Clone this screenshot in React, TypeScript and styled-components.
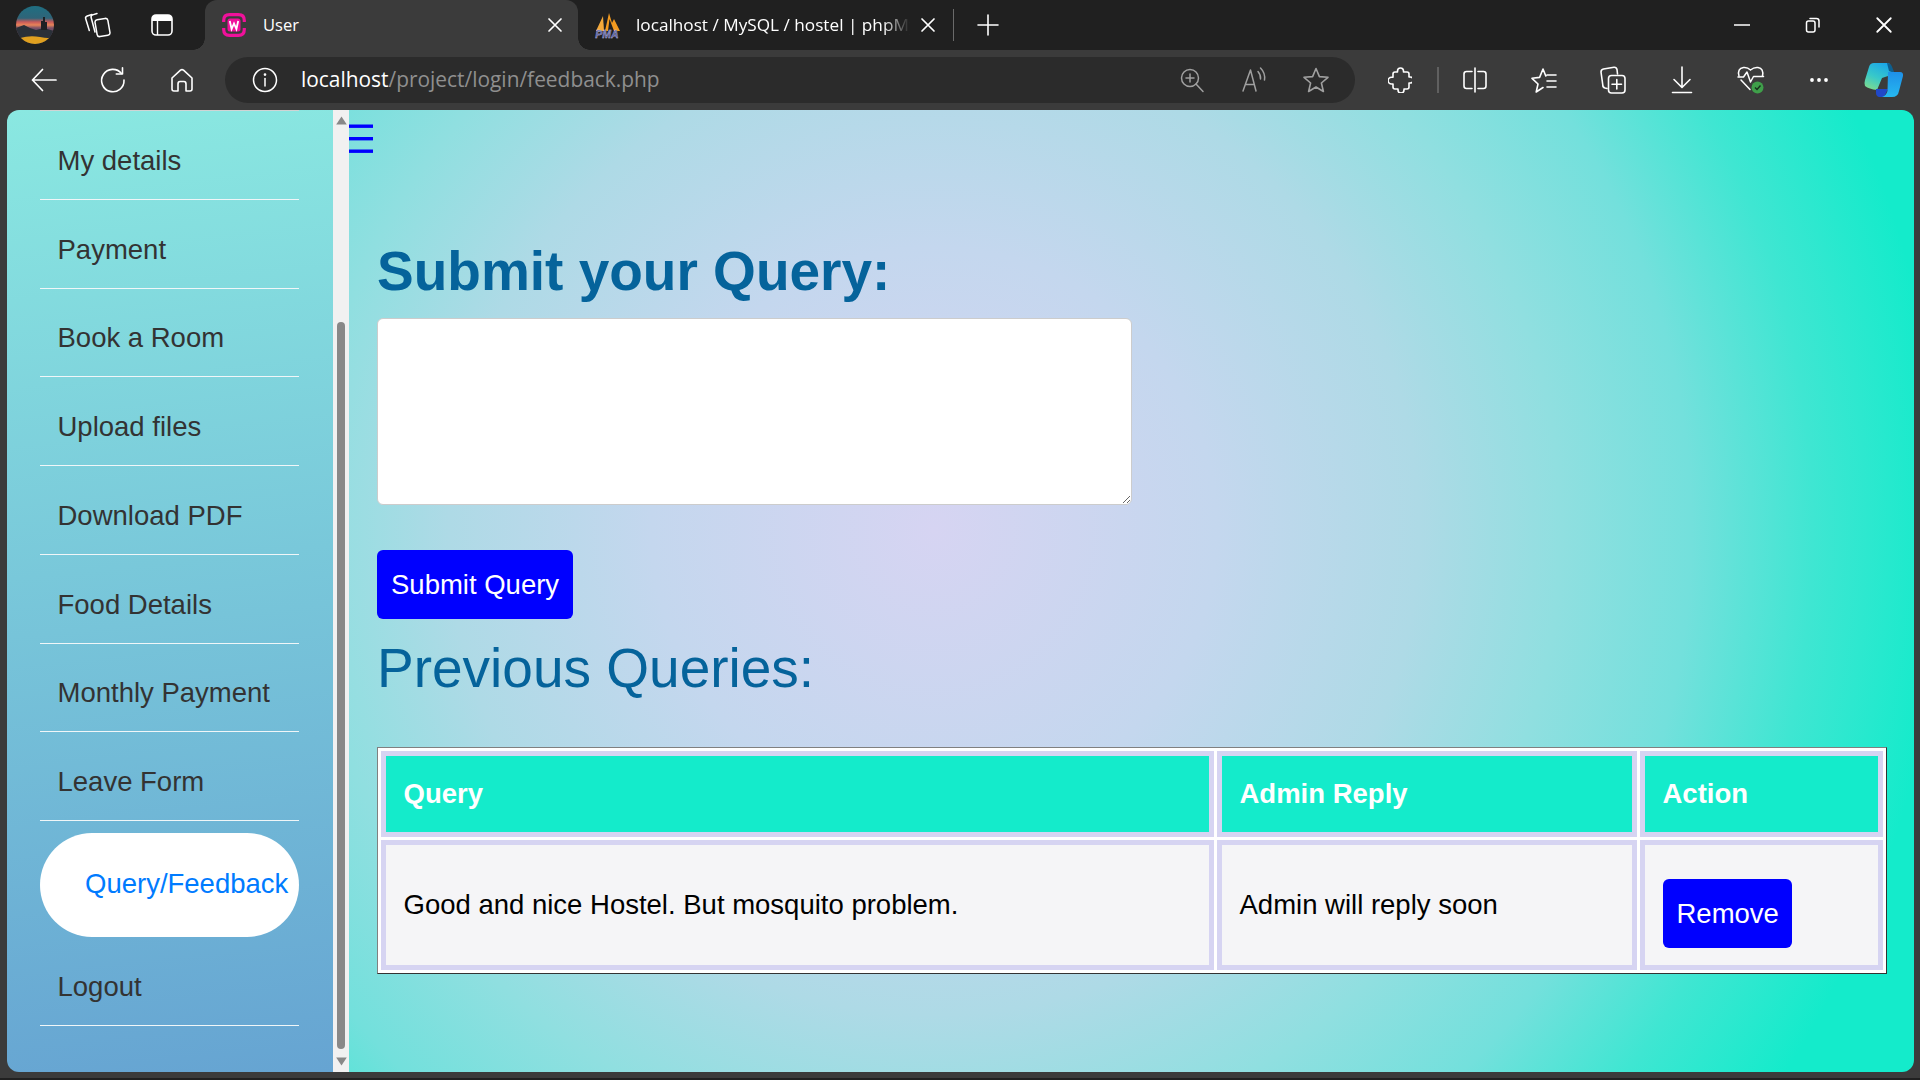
import React from "react";
import styled, { createGlobalStyle } from "styled-components";

const Global = createGlobalStyle`
  html, body { margin: 0; padding: 0; height: 100%; background: #202020; overflow: hidden; }
  #root { height: 100%; }
  * { box-sizing: border-box; }
`;

const CHROME_FONT = `"Open Sans", "Noto Sans", sans-serif`;
const PAGE_FONT = `"Liberation Sans", Arial, sans-serif`;

const Browser = styled.div`
  display: flex;
  flex-direction: column;
  height: 1080px;
  width: 1920px;
  background: #3b3b3b;
  border-bottom: 2px solid #202020;
`;

const TabStrip = styled.div`
  display: flex;
  align-items: center;
  height: 50px;
  flex: none;
  background: #202020;
  padding-left: 16px;
  color: #fff;
  font-family: ${CHROME_FONT};
`;

const Avatar = styled.div`
  width: 38px;
  height: 38px;
  margin-right: 10px;
  display: flex;
`;

const Slot = styled.div<{ $w: number }>`
  width: ${(p) => p.$w}px;
  flex: none;
  display: flex;
  align-items: center;
  justify-content: center;
  color: #fff;
`;

const ActiveTab = styled.div`
  position: relative;
  display: flex;
  align-items: center;
  width: 373px;
  height: 50px;
  margin-left: 11px;
  padding-left: 17px;
  background: #3b3b3b;
  border-radius: 12px 12px 0 0;
  font-size: 16.5px;
  &::before,
  &::after {
    content: "";
    position: absolute;
    bottom: 0;
    width: 12px;
    height: 12px;
  }
  &::before {
    left: -12px;
    background: radial-gradient(circle at 0 0, transparent 11.5px, #3b3b3b 12px);
  }
  &::after {
    right: -12px;
    background: radial-gradient(circle at 100% 0, transparent 11.5px, #3b3b3b 12px);
  }
`;

const TabTitle = styled.span<{ $fade?: boolean }>`
  flex: 1;
  min-width: 0;
  margin-left: ${(p) => (p.$fade ? 15 : 17)}px;
  padding-bottom: 2px;
  white-space: nowrap;
  overflow: hidden;
  ${(p) =>
    p.$fade
      ? `margin-right: 10px;
         mask-image: linear-gradient(90deg, #000 90%, transparent 100%);
         -webkit-mask-image: linear-gradient(90deg, #000 90%, transparent 100%);`
      : ""}
`;

const TabClose = styled.div<{ $end: number }>`
  width: 16px;
  height: 16px;
  flex: none;
  margin-right: ${(p) => p.$end}px;
  display: flex;
`;

const InactiveTab = styled.div`
  display: flex;
  align-items: center;
  width: 375px;
  height: 50px;
  padding-left: 16px;
  font-size: 17.2px;
`;

const TabDivider = styled.div`
  width: 1px;
  height: 32px;
  flex: none;
  background: #6a6a6a;
`;

const WindowControls = styled.div`
  display: flex;
  margin-left: auto;
  padding-right: 1px;
`;

const Toolbar = styled.div`
  display: flex;
  align-items: center;
  height: 60px;
  flex: none;
  padding-left: 10px;
  background: #3b3b3b;
  font-family: ${CHROME_FONT};
`;

const AddressBar = styled.div`
  display: flex;
  align-items: center;
  width: 1130px;
  height: 46px;
  margin: 0 11px 0 9px;
  padding: 0 8px 0 27px;
  border-radius: 23px;
  background: #2b2b2b;
  flex: none;
`;

const Url = styled.div`
  margin-left: 23px;
  padding-bottom: 2px;
  font-size: 20.9px;
  color: #8f8f8f;
  white-space: nowrap;
`;

const UrlHost = styled.span`
  color: #fff;
`;

const AddressActions = styled.div`
  display: flex;
  margin-left: auto;
`;

const ToolbarSeparator = styled.div`
  width: 2px;
  height: 26px;
  flex: none;
  margin: 0 1px 0 3px;
  background: #606060;
`;

const ContentFrame = styled.div`
  flex: 1;
  min-height: 0;
  display: flex;
  margin: 0 6px 6px 7px;
  border-radius: 12px;
  overflow: hidden;
`;

const Sidebar = styled.nav`
  width: 326px;
  flex: none;
  padding: 0 34px 0 33px;
  background: linear-gradient(174deg, #8ae8e1 0%, #66a4d2 100%);
  font-family: ${PAGE_FONT};
  font-size: 27.5px;
`;

const NavItem = styled.div`
  display: flex;
  align-items: center;
  height: 88.75px;
  padding: 12px 0 0 17.5px;
  color: #333;
  border-bottom: 1px solid #f0f6f8;
`;

const NavTop = styled.div`
  height: 1px;
  background: #d0d4d4;
`;

const NavActive = styled.div`
  display: flex;
  align-items: center;
  height: 104px;
  margin-top: 12px;
  padding: 0 0 3px 45px;
  background: #fff;
  border-radius: 52px;
  color: #007bff;
  white-space: nowrap;
`;

const Scrollbar = styled.div`
  width: 16px;
  flex: none;
  display: flex;
  flex-direction: column;
  align-items: center;
  justify-content: space-between;
  padding: 6px 0;
  background: #f1f1f1;
`;

const ScrollTrack = styled.div`
  flex: 1;
  display: flex;
  align-items: flex-end;
  padding-bottom: 8px;
`;

const ScrollThumb = styled.div`
  width: 8px;
  height: 727px;
  border-radius: 4px;
  background: #888;
`;

const Main = styled.main`
  flex: 1;
  min-width: 0;
  background: radial-gradient(
    circle 1010px at 585px 420px,
    #d6d4f2 0%,
    #c4d7ee 28%,
    #aedae6 48%,
    #90dfe0 62%,
    #73e0dc 75%,
    #3fe6d2 87%,
    #14ebcb 100%
  );
  font-family: ${PAGE_FONT};
  font-size: 27.5px;
`;

const MenuIcon = styled.div`
  height: 30px;
  width: 24px;
  margin-top: 14px;
  color: #0000ff;
  display: flex;
`;

const Body = styled.div`
  padding: 0 27px 0 28px;
`;

const QueryTitle = styled.h1`
  margin: 85px 0 0;
  font-size: 55px;
  line-height: 64px;
  font-weight: 700;
  color: #05639b;
`;

const QueryInput = styled.textarea`
  display: block;
  width: 755px;
  height: 187px;
  margin-top: 15px;
  background: #fff;
  border: 1px solid #ccc;
  border-radius: 6px;
  font-family: ${PAGE_FONT};
`;

const BlueButton = styled.button`
  display: block;
  height: 69px;
  padding: 0 14px;
  border: 0;
  border-radius: 6px;
  background: #0000ff;
  color: #fff;
  font-family: ${PAGE_FONT};
  font-size: 27.5px;
`;

const SubmitButton = styled(BlueButton)`
  margin-top: 45px;
`;

const RemoveButton = styled(BlueButton)`
  margin-top: 17px;
  width: 129px;
`;

const PrevTitle = styled.h2`
  margin: 17px 0 0;
  font-size: 55px;
  line-height: 64px;
  font-weight: 400;
  color: #05639b;
`;

const QueryTable = styled.table`
  width: 1510px;
  margin-top: 47px;
  table-layout: fixed;
  border-collapse: separate;
  border-spacing: 3px;
  background: #fff;
  border: 1px solid;
  border-color: #808080 #333 #333 #808080;
`;

const HeadCell = styled.th`
  height: 86px;
  padding: 0 17.5px;
  border: 5px solid #d6d4f2;
  background: #14ebcb;
  color: #fff;
  text-align: left;
  font-size: 27.5px;
  font-weight: 700;
`;

const DataCell = styled.td`
  height: 130px;
  padding: 0 17.5px;
  border: 5px solid #d6d4f2;
  background: #f5f5f7;
  color: #000;
`;

/* ---- icons ---- */
const Ic = styled.svg.attrs({ fill: "none", stroke: "currentColor", strokeLinecap: "round", strokeLinejoin: "round" })``;

const GrayIcon = styled.span`
  display: flex;
  color: #a0a0a0;
`;

const AvatarImg = () => (
  <svg width="38" height="38" viewBox="0 0 38 38">
    <defs>
      <clipPath id="avc"><circle cx="19" cy="19" r="19" /></clipPath>
      <linearGradient id="avg" x1="0" y1="0" x2="0" y2="1">
        <stop offset="0" stopColor="#1f6f82" />
        <stop offset="0.32" stopColor="#2f6478" />
        <stop offset="0.42" stopColor="#c95a5a" />
        <stop offset="0.5" stopColor="#e88458" />
        <stop offset="0.58" stopColor="#7a5068" />
        <stop offset="1" stopColor="#3a3a48" />
      </linearGradient>
    </defs>
    <g clipPath="url(#avc)">
      <rect width="38" height="38" fill="url(#avg)" />
      <path d="M0 22 L8 19 L14 22 L20 24 L28 22 L38 25 V38 H0Z" fill="#2a3038" />
      <path d="M25 24 V15 h2 V11 h2 v5 h2 V24Z" fill="#1d2024" />
      <path d="M4 32 Q14 29 24 31 T36 31 V38 H4Z" fill="#e0a020" />
    </g>
  </svg>
);

const TabsIcon = () => (
  <Ic width="28" height="28" viewBox="0 0 28 28" strokeWidth="1.5">
    <rect x="13" y="8" width="13" height="17" rx="2.5" transform="rotate(-10 19.5 16.5)" />
    <path d="M9 3.5 4.2 5Q2 5.8 2.7 7.8L6.3 19.5" />
    <path d="M14 2.5 9.6 3.9Q7.5 4.7 8.2 6.7L12 21" />
  </Ic>
);

const PanelIcon = () => (
  <svg width="22" height="22" viewBox="0 0 22 22">
    <rect x="1" y="1" width="20" height="20" rx="4" fill="none" stroke="#fff" strokeWidth="1.6" />
    <path d="M1 5a4 4 0 0 1 4-4h12a4 4 0 0 1 4 4v2H1Z" fill="#fff" />
    <path d="M6.5 7V21" stroke="#fff" strokeWidth="1.4" />
  </svg>
);

const WampIcon = () => (
  <svg width="24" height="24" viewBox="0 0 24 24">
    <path d="M1.7 9V7.5Q1.7 1.7 7.5 1.7H16.5Q22.3 1.7 22.3 7.5V9M1.7 15V16.5Q1.7 22.3 7.5 22.3H16.5Q22.3 22.3 22.3 16.5V15" fill="none" stroke="#f0119b" strokeWidth="3.2" />
    <rect x="5.5" y="5.5" width="13" height="13" rx="2.5" fill="#f0119b" />
    <path d="M7.8 8 9.6 16 12 10.5 14.4 16 16.2 8" fill="none" stroke="#fff" strokeWidth="1.8" />
  </svg>
);

const PmaIcon = () => (
  <svg width="27" height="27" viewBox="0 0 27 27">
    <path d="M2 19 L9 4 L10 19Z" fill="#f4a93a" />
    <path d="M11 19 L15 1 L18 11 L20 7 L26 19Z" fill="#f39a1f" />
    <path d="M14 19 L15.5 7 L20 19Z" fill="#202020" />
    <text x="13" y="26" textAnchor="middle" fontFamily="Liberation Sans" fontStyle="italic" fontWeight="700" fontSize="10.5" fill="#5a5fa5" stroke="#c8c8e0" strokeWidth="0.3">PMA</text>
  </svg>
);

const CloseX = ({ s = 16, w = 1.7 }: { s?: number; w?: number }) => (
  <Ic width={s} height={s} viewBox="0 0 16 16" strokeWidth={w}>
    <path d="M2 2 14 14M14 2 2 14" />
  </Ic>
);

const PlusIcon = () => (
  <Ic width="22" height="22" viewBox="0 0 22 22" strokeWidth="1.6">
    <path d="M11 1V21M1 11H21" />
  </Ic>
);

const MinIcon = () => (
  <Ic width="16" height="16" viewBox="0 0 16 16" strokeWidth="1.6">
    <path d="M0.5 8H15.5" />
  </Ic>
);

const RestoreIcon = () => (
  <Ic width="18" height="18" viewBox="0 0 18 18" strokeWidth="1.5">
    <rect x="2.5" y="5" width="8.5" height="11" rx="2" />
    <path d="M6 2.5 H12.5 Q15 2.5 15 5 V11" />
  </Ic>
);

const BackIcon = () => (
  <Ic width="26" height="24" viewBox="0 0 26 24" strokeWidth="1.7">
    <path d="M25 12H1.5M11.5 1.5 1.5 12 11.5 22.5" />
  </Ic>
);

const RefreshIcon = () => (
  <Ic width="28" height="28" viewBox="0 0 28 28" strokeWidth="1.6">
    <path d="M22.5 7.5A11.2 11.2 0 1 0 25 14" />
    <path d="M23.5 1.8V8H17.3" />
  </Ic>
);

const HomeIcon = () => (
  <Ic width="26" height="26" viewBox="0 0 26 26" strokeWidth="1.6">
    <path d="M3 11 11.5 3.2Q13 2 14.5 3.2L23 11V22Q23 24 21 24H17V17Q17 14.5 15 14.5H11Q9 14.5 9 17V24H5Q3 24 3 22Z" />
  </Ic>
);

const InfoIcon = () => (
  <Ic width="26" height="26" viewBox="0 0 26 26" strokeWidth="1.5">
    <circle cx="13" cy="13" r="11.5" />
    <path d="M13 11.5V19" />
    <circle cx="13" cy="7.6" r="0.6" fill="currentColor" />
  </Ic>
);

const ZoomIcon = () => (
  <Ic width="26" height="26" viewBox="0 0 26 26" strokeWidth="1.5">
    <circle cx="11" cy="11" r="8.5" />
    <path d="M17 17 24 24.5M11 7V15M7 11H15" />
  </Ic>
);

const ReadIcon = () => (
  <Ic width="28" height="28" viewBox="0 0 28 28" strokeWidth="1.5">
    <path d="M3 25 10.5 4 16 25M5.5 18.5H14" />
    <path d="M18 5.5Q21 9 20.5 13M20.5 2Q25.5 7 24.5 14" />
  </Ic>
);

const StarIcon = () => (
  <Ic width="28" height="28" viewBox="0 0 28 28" strokeWidth="1.6">
    <path d="M14 2.5 17.4 10.6 26 11.3 19.4 17 21.4 25.5 14 21 6.6 25.5 8.6 17 2 11.3 10.6 10.6Z" />
  </Ic>
);

const PuzzleIcon = () => (
  <Ic width="24" height="26" viewBox="0 0 24 26" strokeWidth="1.6">
    <path d="M7 5H9.5V4A3 3 0 0 1 15.5 4V5H19Q21 5 21 7V10H22A3 3 0 0 1 22 16H21V20Q21 22 19 22H16V23A3 3 0 0 1 10 23V22H7Q5 22 5 20V17H3.5A3.4 3.4 0 0 1 3.5 10.2H5V7Q5 5 7 5Z" />
  </Ic>
);

const SplitIcon = () => (
  <Ic width="24" height="26" viewBox="0 0 24 26" strokeWidth="1.6">
    <path d="M9 4.5H3.5Q1 4.5 1 7V19Q1 21.5 3.5 21.5H9M15 4.5H20.5Q23 4.5 23 7V19Q23 21.5 20.5 21.5H15M12 1V25" />
  </Ic>
);

const FavIcon = () => (
  <Ic width="26" height="26" viewBox="0 0 26 26" strokeWidth="1.6">
    <path d="M12 20.5 5.2 25 7 17 1 11.3 8.6 10.4 12 2 14.8 9M16 8H25M16 14H25M16 20H25" />
  </Ic>
);

const CollectionsIcon = () => (
  <Ic width="26" height="28" viewBox="0 0 26 28" strokeWidth="1.6">
    <path d="M7 22.5 5 22Q2.5 21 2.8 19L1 6Q1 3.5 3.5 3L14 1.2Q16.5 1 17 3.5L17.5 8" />
    <rect x="8.5" y="9.5" width="16.5" height="17.5" rx="3" />
    <path d="M16.8 13.5V23M12 18.2H21.5" />
  </Ic>
);

const DownloadIcon = () => (
  <Ic width="22" height="28" viewBox="0 0 22 28" strokeWidth="1.6">
    <path d="M11 1V21M3 13.5 11 21.5 19 13.5M1.5 26.5H20.5" />
  </Ic>
);

const HealthIcon = () => (
  <svg width="28" height="30" viewBox="0 0 28 30" fill="none">
    <path d="M2 11Q0 3.5 6.5 2.5Q10.5 2 13.5 5Q17 2 21 2.5Q27 3.5 25.5 11M4 15 13 24.5" stroke="#fff" strokeWidth="1.5" strokeLinecap="round" />
    <path d="M1 12H6.5L10 7 13.5 17 16.5 11.5H26.5" stroke="#fff" strokeWidth="1.5" strokeLinejoin="round" strokeLinecap="round" />
    <circle cx="20.5" cy="22.5" r="6" fill="#3f9f4a" />
    <path d="M18 22.5 20 24.5 23.5 20.5" stroke="#17301c" strokeWidth="1.4" />
  </svg>
);

const DotsIcon = () => (
  <svg width="20" height="6" viewBox="0 0 20 6">
    <circle cx="3" cy="3" r="1.9" fill="#fff" />
    <circle cx="10" cy="3" r="1.9" fill="#fff" />
    <circle cx="17" cy="3" r="1.9" fill="#fff" />
  </svg>
);

const CopilotIcon = () => (
  <svg width="40" height="36" viewBox="0 0 40 36">
    <defs>
      <linearGradient id="cpa" x1="0.7" y1="0" x2="0.2" y2="1">
        <stop offset="0" stopColor="#1aa5e8" />
        <stop offset="0.55" stopColor="#38c9c9" />
        <stop offset="1" stopColor="#7edb8e" />
      </linearGradient>
      <linearGradient id="cpb" x1="0.5" y1="0" x2="0.5" y2="1">
        <stop offset="0" stopColor="#1e90e8" />
        <stop offset="1" stopColor="#26b8f0" />
      </linearGradient>
    </defs>
    <path d="M10 1H23Q27 1 26.5 5L30 12 18 16 13 28Q5 27 1 24Q0 21 1 18L5 5Q6 1 10 1Z" fill="url(#cpa)" />
    <path d="M23 1Q27 1 28.5 6L30.5 11 25 9Z" fill="#0d5f8f" />
    <path d="M12 27H24L20 35H15Q12 34 12 31Z" fill="#2048c8" />
    <path d="M24 10H36Q39.5 10 39 14L35 29Q34 35 28 35H18Q22 34 23.5 29Z" fill="url(#cpb)" />
  </svg>
);

const Hamburger = () => (
  <svg width="24" height="30" viewBox="0 0 24 30">
    <rect x="0" y="0.5" width="24" height="3.4" fill="currentColor" />
    <rect x="0" y="13" width="24" height="3.4" fill="currentColor" />
    <rect x="0" y="25.5" width="24" height="3.4" fill="currentColor" />
  </svg>
);

const ArrowUp = () => (
  <svg width="11" height="9" viewBox="0 0 11 9">
    <path d="M5.5 0.5 10.8 8.5H0.2Z" fill="#888" />
  </svg>
);

const ArrowDown = () => (
  <svg width="11" height="9" viewBox="0 0 11 9">
    <path d="M5.5 8.5 10.8 0.5H0.2Z" fill="#888" />
  </svg>
);

const navItems = [
  "My details",
  "Payment",
  "Book a Room",
  "Upload files",
  "Download PDF",
  "Food Details",
  "Monthly Payment",
  "Leave Form",
];

export default function App() {
  return (
    <>
      <Global />
      <Browser>
        <TabStrip>
          <Avatar><AvatarImg /></Avatar>
          <Slot $w={65}><TabsIcon /></Slot>
          <Slot $w={65}><PanelIcon /></Slot>
          <ActiveTab>
            <WampIcon />
            <TabTitle>User</TabTitle>
            <TabClose $end={15}><CloseX /></TabClose>
          </ActiveTab>
          <InactiveTab>
            <PmaIcon />
            <TabTitle $fade>localhost / MySQL / hostel | phpMyAdmin 5.2</TabTitle>
            <TabClose $end={17}><CloseX /></TabClose>
          </InactiveTab>
          <TabDivider />
          <Slot $w={68}><PlusIcon /></Slot>
          <WindowControls>
            <Slot $w={71}><MinIcon /></Slot>
            <Slot $w={71}><RestoreIcon /></Slot>
            <Slot $w={71}><CloseX s={18} w={1.6} /></Slot>
          </WindowControls>
        </TabStrip>
        <Toolbar>
          <Slot $w={68}><BackIcon /></Slot>
          <Slot $w={69}><RefreshIcon /></Slot>
          <Slot $w={69}><HomeIcon /></Slot>
          <AddressBar>
            <Slot $w={26}><InfoIcon /></Slot>
            <Url><UrlHost>localhost</UrlHost>/project/login/feedback.php</Url>
            <AddressActions>
              <Slot $w={62}><GrayIcon><ZoomIcon /></GrayIcon></Slot>
              <Slot $w={62}><GrayIcon><ReadIcon /></GrayIcon></Slot>
              <Slot $w={62}><GrayIcon><StarIcon /></GrayIcon></Slot>
            </AddressActions>
          </AddressBar>
          <Slot $w={68}><PuzzleIcon /></Slot>
          <ToolbarSeparator />
          <Slot $w={69}><SplitIcon /></Slot>
          <Slot $w={69}><FavIcon /></Slot>
          <Slot $w={69}><CollectionsIcon /></Slot>
          <Slot $w={69}><DownloadIcon /></Slot>
          <Slot $w={69}><HealthIcon /></Slot>
          <Slot $w={68}><DotsIcon /></Slot>
          <Slot $w={62}><CopilotIcon /></Slot>
        </Toolbar>
        <ContentFrame>
          <Sidebar>
            <NavTop />
            {navItems.map((t) => (
              <NavItem key={t}>{t}</NavItem>
            ))}
            <NavActive>Query/Feedback</NavActive>
            <NavItem>Logout</NavItem>
          </Sidebar>
          <Scrollbar>
            <ArrowUp />
            <ScrollTrack><ScrollThumb /></ScrollTrack>
            <ArrowDown />
          </Scrollbar>
          <Main>
            <MenuIcon><Hamburger /></MenuIcon>
            <Body>
              <QueryTitle>Submit your Query:</QueryTitle>
              <QueryInput />
              <SubmitButton>Submit Query</SubmitButton>
              <PrevTitle>Previous Queries:</PrevTitle>
              <QueryTable>
                <colgroup>
                  <col style={{ width: 833 }} />
                  <col style={{ width: 420 }} />
                  <col style={{ width: 243 }} />
                </colgroup>
                <thead>
                  <tr>
                    <HeadCell>Query</HeadCell>
                    <HeadCell>Admin Reply</HeadCell>
                    <HeadCell>Action</HeadCell>
                  </tr>
                </thead>
                <tbody>
                  <tr>
                    <DataCell>Good and nice Hostel. But mosquito problem.</DataCell>
                    <DataCell>Admin will reply soon</DataCell>
                    <DataCell><RemoveButton>Remove</RemoveButton></DataCell>
                  </tr>
                </tbody>
              </QueryTable>
            </Body>
          </Main>
        </ContentFrame>
      </Browser>
    </>
  );
}
